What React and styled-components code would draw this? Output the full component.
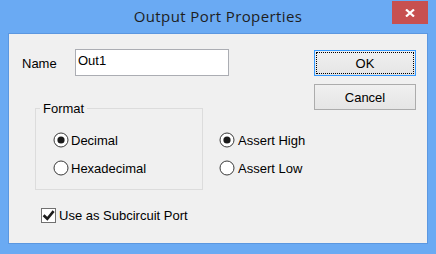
import React from "react";
import styled, { createGlobalStyle } from "styled-components";

const Global = createGlobalStyle`
  html, body { margin: 0; padding: 0; background: #6aaaf3; overflow: hidden; }
  * { box-sizing: border-box; }
`;

const Window = styled.div`
  width: 436px;
  height: 254px;
  background: #6aaaf3;
  display: flex;
  flex-direction: column;
  font-family: "Liberation Sans", Arial, sans-serif;
  font-size: 13px;
  color: #000;
`;

const TitleBar = styled.div`
  height: 33px;
  display: grid;
  grid-template-columns: 36px 1fr 36px;
  padding: 0 8px;
  align-items: start;
`;

const Title = styled.div`
  grid-column: 2;
  text-align: center;
  font-family: "Open Sans", sans-serif;
  font-size: 15px;
  letter-spacing: 0.4px;
  line-height: 20px;
  padding-top: 6px;
  color: #1e1e1e;
`;

const CloseButton = styled.div`
  grid-column: 3;
  margin-top: 1px;
  height: 23px;
  background: #c75050;
  display: flex;
  align-items: center;
  justify-content: center;
`;

const Client = styled.div`
  margin: 0 8px;
  height: 211px;
  border: 1px solid #5b97e0;
  background: #f0f0f0;
  display: flex;
  padding: 15px 11px 0 13px;
`;

const LeftColumn = styled.div`
  flex: 1;
  display: flex;
  flex-direction: column;
`;

const NameRow = styled.div`
  display: flex;
  align-items: center;
  height: 27px;
`;

const NameLabel = styled.label`
  width: 53px;
  line-height: 15px;
  padding-top: 2px;
`;

const TextBox = styled.input`
  width: 154px;
  height: 27px;
  border: 1px solid #abadb3;
  background: #fff;
  padding: 3px 2px 7px;
  margin: 0;
  font-family: "Liberation Sans", Arial, sans-serif;
  font-size: 13px;
  line-height: 15px;
  color: #000;
  outline: none;
`;

const OptionsRow = styled.div`
  display: flex;
  align-items: flex-start;
  gap: 16px;
  margin-top: 25px;
  margin-left: 13px;
`;

const GroupBox = styled.fieldset`
  width: 168px;
  margin: 0;
  padding: 0;
  border: 1px solid #dcdcdc;
  min-inline-size: 0;
`;

const Legend = styled.legend`
  margin-left: 4px;
  padding: 0 3px;
  line-height: 15px;
`;

const RadioStack = styled.div`
  display: flex;
  flex-direction: column;
  gap: 12px;
  padding: ${(p) => p.$pad};
`;

const OptionLabel = styled.label`
  display: flex;
  align-items: center;
  gap: ${(p) => p.$gap || 2}px;
  height: 16px;
  line-height: 15px;
  white-space: nowrap;
`;

const CheckRow = styled.div`
  margin-top: 17px;
  margin-left: 19px;
`;

const ButtonColumn = styled.div`
  display: flex;
  flex-direction: column;
  gap: 8px;
  margin-top: 1px;
  width: 102px;
`;

const Button = styled.button`
  width: 102px;
  height: 26px;
  margin: 0;
  padding: 0;
  border: 1px solid ${(p) => (p.$primary ? "#3399ff" : "#acacac")};
  background: linear-gradient(#f0f0f0, #e5e5e5);
  font-family: "Liberation Sans", Arial, sans-serif;
  font-size: 13px;
  color: #000;
  outline: ${(p) => (p.$primary ? "1px dotted #000" : "none")};
  outline-offset: -3px;
`;

const Radio = ({ checked }) => (
  <svg width="16" height="16" viewBox="0 0 16 16">
    <circle cx="8" cy="8" r="7" fill="#fff" stroke="#3a3a3a" strokeWidth="1" />
    {checked && <circle cx="8" cy="8" r="3.6" fill="#1a1a1a" />}
  </svg>
);

const Check = () => (
  <svg width="15" height="15" viewBox="0 0 15 15">
    <rect x="0.5" y="0.5" width="14" height="14" fill="#fff" stroke="#707070" />
    <path d="M2.6 7.2 L6.3 10.8 L12.6 3.2" fill="none" stroke="#1c1c1c" strokeWidth="2.6" />
  </svg>
);

export default function App() {
  return (
    <>
      <Global />
      <Window>
        <TitleBar>
          <Title>Output Port Properties</Title>
          <CloseButton>
            <svg width="10" height="8" viewBox="0 0 10 8">
              <path d="M1 0.5 L9 7.5 M9 0.5 L1 7.5" stroke="#fff" strokeWidth="2.2" />
            </svg>
          </CloseButton>
        </TitleBar>
        <Client>
          <LeftColumn>
            <NameRow>
              <NameLabel>Name</NameLabel>
              <TextBox defaultValue="Out1" />
            </NameRow>
            <OptionsRow>
              <GroupBox>
                <Legend>Format</Legend>
                <RadioStack $pad="16px 0 13px 17px">
                  <OptionLabel>
                    <Radio checked />
                    Decimal
                  </OptionLabel>
                  <OptionLabel>
                    <Radio />
                    Hexadecimal
                  </OptionLabel>
                </RadioStack>
              </GroupBox>
              <RadioStack $pad="31px 0 0 0">
                <OptionLabel $gap={3}>
                  <Radio checked />
                  Assert High
                </OptionLabel>
                <OptionLabel $gap={3}>
                  <Radio />
                  Assert Low
                </OptionLabel>
              </RadioStack>
            </OptionsRow>
            <CheckRow>
              <OptionLabel $gap={3}>
                <Check />
                Use as Subcircuit Port
              </OptionLabel>
            </CheckRow>
          </LeftColumn>
          <ButtonColumn>
            <Button $primary>OK</Button>
            <Button>Cancel</Button>
          </ButtonColumn>
        </Client>
      </Window>
    </>
  );
}
